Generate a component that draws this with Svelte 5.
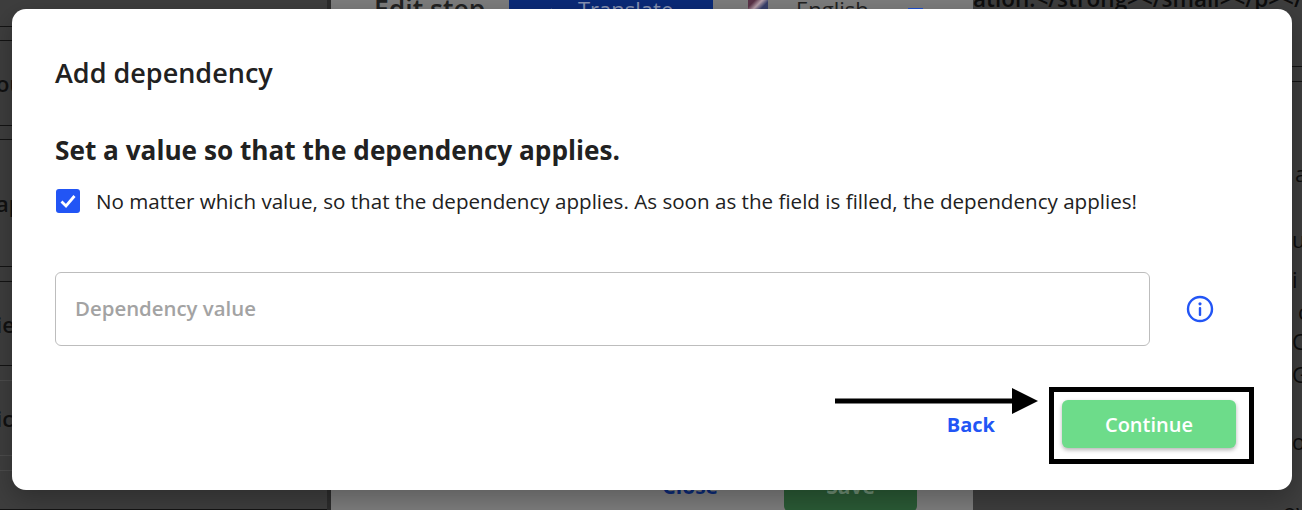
<script>
  let anyValue = $state(true);

  // bits of the page behind the overlay, only their edges peek out
  const leftRows = [
    { h: 27 }, { h: 14 }, { h: 85, text: "ou" }, { h: 14 }, { h: 127, text: "ap" },
    { h: 15 }, { h: 84, text: "ie" }, { h: 15, faint: true }, { h: 75, text: "ic", faint: true }, { h: 15, faint: true }, { h: 39 }
  ];
  const rightRows = [
    { h: 57, line: true }, { h: 15, line: true }, { h: 80 },
    { h: 22, text: "a", pad: 322 }, { h: 44 }, { h: 22, text: "ui", pad: 319 }, { h: 18 },
    { h: 22, text: "i", pad: 319 }, { h: 10 }, { h: 22, text: "c", pad: 325 }, { h: 8 },
    { h: 22, text: "C", pad: 319 }, { h: 11 }, { h: 22, text: "G", pad: 319 }, { h: 45 },
    { h: 22, text: "o", pad: 319 }, { h: 48 }, { h: 22, text: "ov", pad: 310 }, { h: 2 }
  ];
</script>

<div class="page">
  <div class="backdrop">
    <div class="side left">
      {#each leftRows as row}
        <div class="row" class:faint={row.faint} style={`height:${row.h}px`}>{row.text ?? ""}</div>
      {/each}
    </div>
    <div class="center">
      <div class="step-head">
        <strong class="step-title">Edit step</strong>
        <span class="translate"><i class="star">★</i>Translate</span>
        <span class="flag"></span>
        <span class="lang">English</span>
        <span class="lang-caret"></span>
      </div>
      <div class="step-foot">
        <span class="close">Close</span>
        <span class="save">Save</span>
      </div>
    </div>
    <div class="side right">
      <div class="code">ation.&lt;/strong&gt;&lt;/small&gt;&lt;/p&gt;&lt;/dependency&gt;</div>
      {#each rightRows as row}
        <div class="frag" class:line={row.line} style={`height:${row.h}px;padding-left:${row.pad ?? 0}px`}>{row.text ?? ""}</div>
      {/each}
      <div class="code tail">ion/smaller/ssmall-16-s</div>
    </div>
  </div>

  <div class="modal">
    <h2>Add dependency</h2>
    <h3>Set a value so that the dependency applies.</h3>
    <label class="check">
      <input type="checkbox" bind:checked={anyValue} />
      <span class="box">
        <svg viewBox="0 0 24 24" width="24" height="24"><path d="M5.5 12.5l4.5 4.5 8.5-10" fill="none" stroke="#fff" stroke-width="2.8"/></svg>
      </span>
      <span>No matter which value, so that the dependency applies. As soon as the field is filled, the dependency applies!</span>
    </label>
    <div class="field-row">
      <input class="field" placeholder="Dependency value" />
      <svg class="info" viewBox="0 0 28 28" width="28" height="28">
        <circle cx="14" cy="14" r="12" fill="none" stroke="#2255f5" stroke-width="2.4"/>
        <circle cx="14" cy="8.8" r="1.6" fill="#2255f5"/>
        <rect x="12.8" y="12" width="2.4" height="9" rx="1" fill="#2255f5"/>
      </svg>
    </div>
    <div class="actions">
      <button class="back">Back</button>
      <div class="highlight"><button class="continue">Continue</button></div>
      <svg class="arrow" viewBox="0 0 205 26" width="205" height="26">
        <rect x="0" y="10.5" width="178" height="5"/>
        <path d="M177 0l26 13-26 13z"/>
      </svg>
    </div>
  </div>
</div>

<style>
  :global(body) {
    margin: 0;
  }

  .page {
    position: relative;
    width: 1302px;
    height: 510px;
    overflow: hidden;
    font-family: "Open Sans", "Noto Sans", sans-serif;
    color: #212121;
  }

  .backdrop {
    display: flex;
    height: 100%;
    background: #3c3c3c;
  }

  .side {
    flex: 1;
    min-width: 0;
    background: #3e3e3e;
    overflow: hidden;
  }

  .left {
    flex: 0 0 327px;
    border-right: 4px solid #2c2c2c;
  }

  .row {
    box-sizing: border-box;
    border-bottom: 1px solid #141414;
    font-size: 22px;
    font-weight: 600;
    color: #111;
    display: flex;
    align-items: center;
    text-indent: -4px;
  }

  .row.faint {
    border-bottom-color: #4c4c4c;
  }

  .center {
    flex: 0 0 642px;
    background: #7d7d7d;
    display: flex;
    flex-direction: column;
    justify-content: space-between;
    overflow: hidden;
  }

  .step-head {
    display: flex;
    height: 30px;
    margin-top: -3px;
    line-height: 24px;
    color: #222;
  }

  .step-title {
    box-sizing: border-box;
    width: 178px;
    padding-left: 43px;
    font-size: 26.5px;
    font-weight: 600;
  }

  .translate {
    width: 204px;
    margin-top: -3px;
    padding-top: 3px;
    background: #0a2a78;
    color: #8792b2;
    font-size: 22px;
    white-space: nowrap;
  }

  .star {
    display: inline-block;
    margin: 0 20px 0 36px;
    font-style: normal;
    font-size: 14px;
  }

  .flag {
    width: 20px;
    height: 9px;
    margin: 3px 0 0 35px;
    background: linear-gradient(135deg, #5a3448 25%, #b9a3ad 50%, #39406a 75%);
  }

  .lang {
    margin-left: 28px;
    font-size: 22px;
  }

  .lang-caret {
    width: 15px;
    height: 3px;
    margin: 11px 0 0 39px;
    background: #1f4fd0;
  }

  .step-foot {
    display: flex;
    justify-content: flex-end;
    align-items: center;
    gap: 66px;
    padding-right: 56px;
    margin-bottom: -2px;
    font-size: 21px;
    font-weight: 700;
  }

  .close {
    margin-top: -7px;
    color: #0b2a77;
  }

  .save {
    background: #2a5a35;
    color: #6f8f75;
    width: 133px;
    height: 46px;
    line-height: 40px;
    border-radius: 6px;
    text-align: center;
    font-size: 21px;
  }

  .code {
    font-size: 22.5px;
    font-weight: 600;
    line-height: 22px;
    margin-top: -12px;
    color: #0d0d0d;
    white-space: nowrap;
  }

  .code.tail {
    margin-top: -9px;
    padding-left: 12px;
    letter-spacing: 2px;
  }

  .frag {
    box-sizing: border-box;
    font-size: 22px;
    line-height: 22px;
    color: #0d0d0d;
    white-space: nowrap;
  }

  .frag.line {
    border-bottom: 1px solid #141414;
  }

  .modal {
    position: absolute;
    left: 12px;
    top: 9px;
    box-sizing: border-box;
    width: 1280px;
    height: 481px;
    background: #fff;
    border-radius: 14px;
    padding: 45px 38px 0 43px;
    box-shadow: 0 8px 26px rgba(0, 0, 0, 0.28);
  }

  h2 {
    margin: 0;
    font-size: 27px;
    line-height: 38px;
    font-weight: 600;
  }

  h3 {
    margin: 40px 0 0;
    font-size: 26.2px;
    line-height: 36px;
    font-weight: 700;
  }

  .check {
    display: flex;
    align-items: center;
    gap: 16px;
    margin-top: 18px;
    padding-left: 1px;
    font-size: 20.6px;
    line-height: 30px;
    white-space: nowrap;
  }

  .check input {
    display: none;
  }

  .box {
    width: 24px;
    height: 24px;
    flex: none;
    border-radius: 3px;
    background: #2255f5;
    display: flex;
  }

  .field-row {
    display: flex;
    align-items: center;
    margin-top: 56px;
  }

  .field {
    box-sizing: border-box;
    width: 1095px;
    height: 74px;
    border: 1px solid #bdbdbd;
    border-radius: 6px;
    padding: 0 19px 2px;
    font: 600 20.4px "Open Sans", sans-serif;
  }

  .field::placeholder {
    color: #a3a3a3;
  }

  .info {
    margin-left: 36px;
  }

  .actions {
    position: relative;
    display: flex;
    justify-content: flex-end;
    align-items: center;
    margin-top: 41px;
  }

  .back {
    border: 0;
    background: none;
    color: #2255f5;
    font: 700 20px "Open Sans", sans-serif;
    margin: -3px 54px 0 0;
    padding: 0;
  }

  .highlight {
    box-sizing: border-box;
    width: 205px;
    height: 77px;
    border: 5px solid #000;
    padding: 8px;
    display: flex;
    align-items: flex-start;
  }

  .continue {
    width: 174px;
    height: 48px;
    flex: none;
    border: 0;
    border-radius: 6px;
    background: #6ddc8a;
    color: #fff;
    font: 600 20px "Open Sans", sans-serif;
    box-shadow: 0 2px 4px rgba(0, 0, 0, 0.3);
  }

  .arrow {
    position: absolute;
    left: 780px;
    top: 1px;
  }
</style>
